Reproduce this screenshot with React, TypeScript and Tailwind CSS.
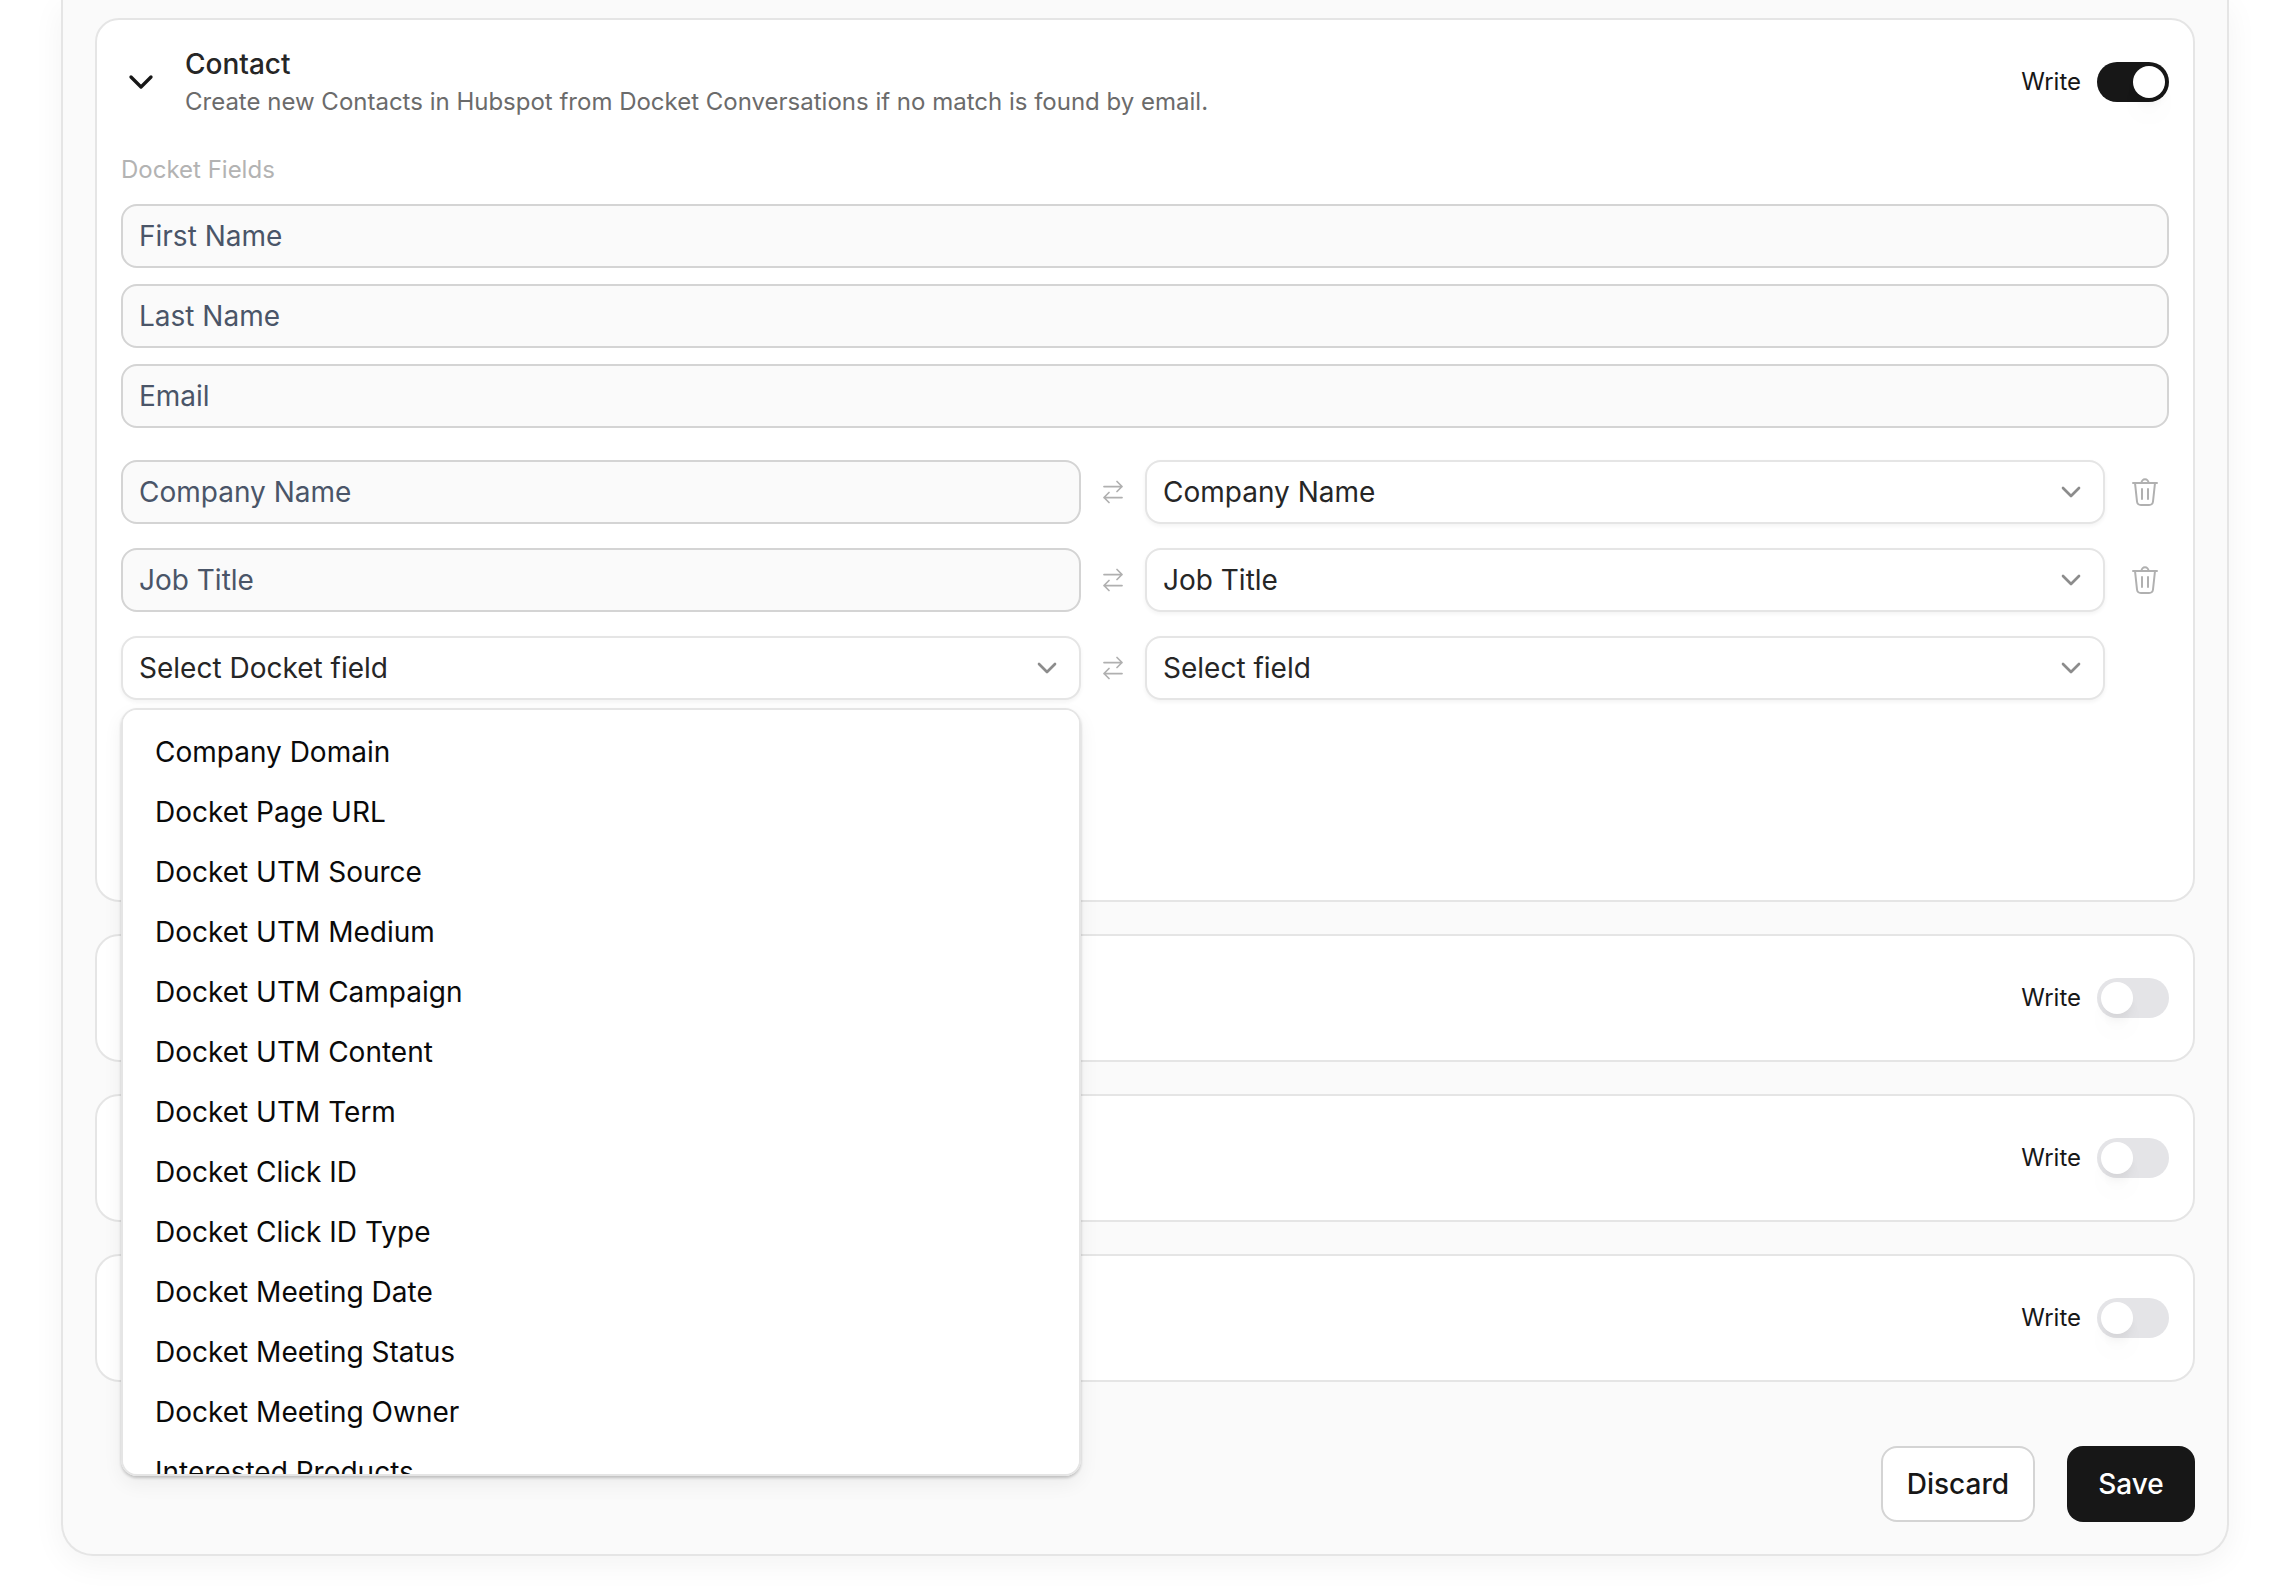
import { useId } from "react";
import { ChevronDown } from "lucide-react";

const docketFields = [
  "Company Domain",
  "Docket Page URL",
  "Docket UTM Source",
  "Docket UTM Medium",
  "Docket UTM Campaign",
  "Docket UTM Content",
  "Docket UTM Term",
  "Docket Click ID",
  "Docket Click ID Type",
  "Docket Meeting Date",
  "Docket Meeting Status",
  "Docket Meeting Owner",
  "Interested Products",
];

const requiredFields = ["First Name", "Last Name", "Email"];
const mappedFields = ["Company Name", "Job Title"];
const collapsedObjects = ["company", "deal", "activity"];

function SwapIcon() {
  return (
    <svg
      width="24"
      height="24"
      viewBox="0 0 24 24"
      fill="none"
      stroke="currentColor"
      strokeWidth="1.75"
      strokeLinecap="round"
      strokeLinejoin="round"
      aria-hidden="true"
    >
      <path d="M3 6.500h18M16 1.500l5 5-5 5M21 17.500H3M8 12.500l-5 5 5 5" />
    </svg>
  );
}

function TrashIcon() {
  return (
    <svg
      width="32"
      height="32"
      viewBox="0 0 32 32"
      fill="none"
      stroke="currentColor"
      strokeWidth="2"
      strokeLinecap="round"
      strokeLinejoin="round"
      aria-hidden="true"
    >
      <path d="M4 7h24M12.500 7a3.500 3.800 0 0 1 7 0M6 7l2 18.500a4 4 0 0 0 4 3.500h8a4 4 0 0 0 4-3.500L26 7M13 13v10M19 13v10" />
    </svg>
  );
}

function WriteSwitch({ defaultChecked = false }: { defaultChecked?: boolean }) {
  return (
    <label className="flex items-center gap-4 text-2xl text-neutral-900">
      Write
      <input
        type="checkbox"
        role="switch"
        defaultChecked={defaultChecked}
        className="flex h-10 w-18 appearance-none items-center rounded-full bg-zinc-200 px-1 before:size-8 before:rounded-full before:bg-white before:shadow-[0_20px_30px_-6px_rgba(0,0,0,0.05),0_8px_12px_-4px_rgba(0,0,0,0.08)] checked:justify-end checked:bg-neutral-900"
      />
    </label>
  );
}

function LockedField({ value }: { value: string }) {
  return (
    <div className="flex-1">
      <input
        type="text"
        readOnly
        aria-label={value}
        value={value}
        className="block h-16 w-full rounded-2xl border-2 border-neutral-300 bg-neutral-50 px-4 text-[28px] leading-10 text-[#4a5568]"
      />
    </div>
  );
}

type SelectFieldProps = {
  label: string;
  value: string;
  options?: string[];
};

function SelectField({ label, value, options = [] }: SelectFieldProps) {
  return (
    <div className="relative flex-1">
      <select
        aria-label={label}
        defaultValue={value}
        className="block h-16 w-full appearance-none rounded-2xl border-2 border-neutral-200 bg-white px-4 text-[28px] leading-10 text-neutral-800 shadow-[0_2px_4px_rgba(0,0,0,0.05)]"
      >
        <option>{value}</option>
        {options.map((option) => (
          <option key={option}>{option}</option>
        ))}
      </select>
      <ChevronDown
        size={32}
        className="pointer-events-none absolute right-[18px] top-4 text-[#8c8c8c]"
      />
    </div>
  );
}

function FieldMenu() {
  return (
    <ul
      role="listbox"
      aria-label="Docket fields"
      className="absolute left-0 top-full z-10 mt-2 h-[768px] w-full overflow-y-auto rounded-2xl border-2 border-neutral-200 bg-white py-3 shadow-[0_2px_3px_rgba(0,0,0,0.2),0_8px_20px_rgba(0,0,0,0.06)] [scrollbar-width:none]"
    >
      {docketFields.map((field) => (
        <li
          key={field}
          role="option"
          aria-selected="false"
          className="flex h-15 items-center px-8 text-[28px] leading-10 text-neutral-950"
        >
          {field}
        </li>
      ))}
    </ul>
  );
}

function SwapSlot() {
  return (
    <div className="flex w-16 shrink-0 justify-center text-[#b0b0b0]">
      <SwapIcon />
    </div>
  );
}

function ContactCard() {
  const titleId = useId();

  return (
    <section
      aria-labelledby={titleId}
      className="rounded-3xl border-2 border-neutral-200 bg-white px-6 pb-50 pt-6"
    >
      <div className="flex items-center gap-6">
        <button type="button" aria-label="Collapse" className="text-neutral-900">
          <ChevronDown size={40} />
        </button>
        <div className="flex-1">
          <h2
            id={titleId}
            className="text-[28px] font-medium leading-10 text-neutral-800"
          >
            Contact
          </h2>
          <p className="text-2xl leading-9 text-[#6b6b6b]">
            Create new Contacts in Hubspot from Docket Conversations if no match
            is found by email.
          </p>
        </div>
        <WriteSwitch defaultChecked />
      </div>

      <h3 className="mt-8 text-2xl leading-9 text-[#b3b3b3]">Docket Fields</h3>

      <div className="mt-4 flex flex-col gap-4">
        {requiredFields.map((field) => (
          <LockedField key={field} value={field} />
        ))}
      </div>

      <div className="mt-8 flex flex-col gap-6">
        {mappedFields.map((field) => (
          <div key={field} className="flex items-center">
            <LockedField value={field} />
            <SwapSlot />
            <SelectField label={`${field} mapping`} value={field} />
            <button
              type="button"
              aria-label={`Remove ${field}`}
              className="ml-4 flex size-12 items-center justify-center text-[#b0b0b0]"
            >
              <TrashIcon />
            </button>
          </div>
        ))}

        <div className="flex items-center pr-16">
          <div className="relative flex flex-1">
            <SelectField
              label="Docket field"
              value="Select Docket field"
              options={docketFields}
            />
            <FieldMenu />
          </div>
          <SwapSlot />
          <SelectField label="Hubspot field" value="Select field" />
        </div>
      </div>
    </section>
  );
}

function CollapsedCard() {
  return (
    <section className="flex h-32 items-center justify-end rounded-3xl border-2 border-neutral-200 bg-white px-6">
      <WriteSwitch />
    </section>
  );
}

export default function App() {
  return (
    <main className="min-h-screen bg-white pb-9 pl-[61px] pr-[57px] font-['Inter',sans-serif]">
      <form className="rounded-b-[32px] border-2 border-t-0 border-neutral-200 bg-neutral-50 px-8 pb-8 pt-[18px] shadow-[0_8px_32px_rgba(0,0,0,0.05)]">
        <div className="flex flex-col gap-8">
          <ContactCard />
          {collapsedObjects.map((name) => (
            <CollapsedCard key={name} />
          ))}
        </div>

        <div className="mt-16 flex justify-end gap-8 text-[28px] font-medium leading-10">
          <button
            type="button"
            className="h-19 rounded-2xl border-2 border-neutral-300 bg-white px-6 text-neutral-900"
          >
            Discard
          </button>
          <button
            type="button"
            className="h-19 w-32 rounded-2xl bg-neutral-900 text-white"
          >
            Save
          </button>
        </div>
      </form>
    </main>
  );
}
